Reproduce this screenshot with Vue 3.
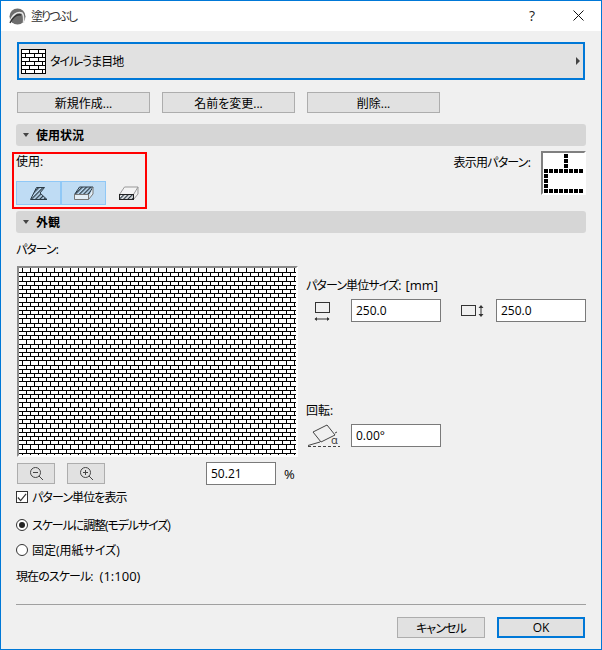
<template>
  <div class="window">
    <div class="titlebar">
      <svg class="logo" width="17" height="17" viewBox="0 0 17 17">
        <circle cx="8.5" cy="8.5" r="8" fill="#6d6d6d" />
        <path d="M1 14 C3 7 8 3 13 5 C15 7 15 10 14.5 15" fill="none" stroke="#e8e8e8" stroke-width="1.6" />
        <path d="M1 15 C4 9 8 6 12 7" fill="none" stroke="#333" stroke-width="1.4" />
      </svg>
      <span class="title">塗りつぶし</span>
      <span class="help">?</span>
      <svg class="close" width="11" height="11" viewBox="0 0 11 11">
        <path d="M0.5 0.5 L10.5 10.5 M10.5 0.5 L0.5 10.5" stroke="#111" stroke-width="1" fill="none" />
      </svg>
    </div>

    <div class="body">
      <div class="fill-select">
        <svg class="brick-icon" width="25" height="25" viewBox="0 0 25 25" shape-rendering="crispEdges">
          <rect x="0.5" y="0.5" width="24" height="24" fill="#fff" stroke="#000" />
          <path v-for="y in [4.5, 8.5, 12.5, 16.5, 20.5]" :key="y" :d="`M1 ${y} H24`" stroke="#000" />
          <path d="M8.5 1V4M17.5 1V4M4.5 5V8M13.5 5V8M21.5 5V8M8.5 9V12M17.5 9V12M4.5 13V16M13.5 13V16M21.5 13V16M8.5 17V20M17.5 17V20M4.5 21V24M13.5 21V24M21.5 21V24" stroke="#000" />
        </svg>
        <span>タイル-うま目地</span>
        <i class="tri-right"></i>
      </div>

      <div class="actions">
        <button class="btn">新規作成...</button>
        <button class="btn">名前を変更...</button>
        <button class="btn">削除...</button>
      </div>

      <div class="section"><i class="tri-down"></i>使用状況</div>
      <div class="usage">
        <div class="usage-left">
          <div class="label">使用:</div>
          <div class="toggles">
            <div class="toggle on">
              <svg width="18" height="13" viewBox="0 0 18 13">
                <defs>
                  <pattern id="hatch" width="3" height="3" patternUnits="userSpaceOnUse" patternTransform="rotate(45)">
                    <rect width="1.3" height="3" fill="#2c3b46" />
                  </pattern>
                </defs>
                <path d="M0.5 12.5 L6.5 0.5 H14.5 L10 6 L17 12.5 Z" fill="url(#hatch)" stroke="#2c3b46" />
              </svg>
            </div>
            <div class="toggle on">
              <svg width="20" height="14" viewBox="0 0 20 14">
                <path d="M0.5 8.5 L5.5 1 H19 L14.5 8.5 Z" fill="url(#hatch)" stroke="#2c3b46" />
                <path d="M0.5 8.5 H14.5 V13.5 H0.5 Z M14.5 13.5 L19 8 V1" fill="#e4eef6" stroke="#777" />
              </svg>
            </div>
            <div class="toggle">
              <svg width="20" height="14" viewBox="0 0 20 14">
                <path d="M0.5 8.5 L5.5 1 H19 L14.5 8.5 Z" fill="#f4f4f4" stroke="#999" />
                <path d="M14.5 13.5 L19 8 V1" fill="none" stroke="#999" />
                <rect x="0.5" y="8.5" width="14" height="5" fill="url(#hatch)" stroke="#222" />
              </svg>
            </div>
          </div>
        </div>
        <div class="usage-right">
          <span class="label">表示用パターン:</span>
          <div class="swatch">
            <svg width="41" height="40" viewBox="0 0 41 40" shape-rendering="crispEdges">
              <rect v-for="d in swatchDots" :key="d[0] + '-' + d[1]" :x="d[0]" :y="d[1]" width="4" height="4" fill="#000" />
            </svg>
          </div>
        </div>
        <div class="highlight"></div>
      </div>

      <div class="section"><i class="tri-down"></i>外観</div>
      <div class="look">
        <div class="look-left">
          <div class="label pat-label">パターン:</div>
          <div class="preview">
            <svg width="277" height="187" shape-rendering="crispEdges">
              <rect width="277" height="187" fill="#fff" />
              <path :d="brickPath" stroke="#000" stroke-width="1" fill="none" />
            </svg>
          </div>
          <div class="zoom-row">
            <button class="btn zoom-btn">
              <svg width="15" height="15" viewBox="0 0 15 15" fill="none" stroke="#444">
                <circle cx="6.5" cy="6.5" r="5" />
                <path d="M10 10 L14 14 M4 6.5 H9" />
              </svg>
            </button>
            <button class="btn zoom-btn">
              <svg width="15" height="15" viewBox="0 0 15 15" fill="none" stroke="#444">
                <circle cx="6.5" cy="6.5" r="5" />
                <path d="M10 10 L14 14 M4 6.5 H9 M6.5 4 V9" />
              </svg>
            </button>
            <div class="input pct">50.21</div>
            <span class="pct-sign">%</span>
          </div>
          <label class="check-row">
            <span class="checkbox">
              <svg width="11" height="11" viewBox="0 0 11 11"><path d="M1 5.5 L4 9 L10 1.5" fill="none" stroke="#333" stroke-width="1.3" /></svg>
            </span>
            <span class="tight">パターン単位を表示</span>
          </label>
          <div class="radio-row first"><span class="radio on"></span><span class="tighter">スケールに調整(モデルサイズ)</span></div>
          <div class="radio-row"><span class="radio"></span>固定(用紙サイズ)</div>
          <div class="label scale"><span class="tight">現在のスケール:</span><span class="latin scale-val">(1:100)</span></div>
        </div>

        <div class="look-right">
          <div class="label size-label"><span class="tight">パターン単位サイズ:</span><span class="latin unit">[mm]</span></div>
          <div class="size-row">
            <svg class="size-icon" width="16" height="19" viewBox="0 0 16 19" fill="none" stroke="#333">
              <rect x="1.5" y="0.5" width="14" height="10" />
              <path d="M1 17 H15" />
              <path d="M0.5 17 L3 15 V19 Z M15.5 17 L13 15 V19 Z" fill="#333" stroke="none" />
            </svg>
            <div class="input">250.0</div>
            <svg class="size-icon2" width="23" height="12" viewBox="0 0 23 12" fill="none" stroke="#333">
              <rect x="0.5" y="0.5" width="14" height="10" />
              <path d="M20 2 V10" />
              <path d="M20 0 L22.5 3 H17.5 Z M20 12 L22.5 9 H17.5 Z" fill="#333" stroke="none" />
            </svg>
            <div class="input">250.0</div>
          </div>
          <div class="label rot-label">回転:</div>
          <div class="size-row">
            <svg class="rot-icon" width="33" height="23" viewBox="0 0 33 23" fill="none" stroke="#444">
              <path d="M6 8 L20 1 L28 11 L14 18 Z" />
              <path d="M1 22.5 H33" stroke-dasharray="3 2" />
              <path d="M1 21.5 L13 18" />
              <path d="M28 9 L30 8" />
              <text x="24" y="20" font-size="11" fill="#333" stroke="none">α</text>
            </svg>
            <div class="input">0.00°</div>
          </div>
        </div>
      </div>

      <div class="separator"></div>
      <div class="footer">
        <button class="btn footer-btn tight">キャンセル</button>
        <button class="btn footer-btn primary">OK</button>
      </div>
    </div>
  </div>
</template>

<script setup>
// dots of the small display pattern in the upper right
const swatchDots = []
for (let i = 0; i < 8; i++) {
  swatchDots.push([1 + i * 5, 16])
  swatchDots.push([1 + i * 5, 36])
}
;[1, 6, 11].forEach((y) => swatchDots.push([21, y]))
;[21, 26, 31].forEach((y) => swatchDots.push([1, y]))

// brick courses, 8px wide, alternate rows shifted by half a brick
const pitch = 4.2
let brickPath = ''
for (let i = 0; i < 45; i++) {
  const y = Math.round(i * pitch)
  const next = Math.round((i + 1) * pitch)
  brickPath += `M0 ${next + 0.5}H277`
  for (let x = i % 2 ? 7 : 3; x < 277; x += 8) {
    brickPath += `M${x + 0.5} ${y}V${next}`
  }
}
</script>

<style>
html,
body {
  margin: 0;
  background: #f0f0f0;
}
</style>

<style scoped>
.window {
  box-sizing: border-box;
  width: 602px;
  height: 650px;
  border: 1px solid #0078d7;
  background: #f0f0f0;
  font-family: "Open Sans", "Noto Sans CJK JP", sans-serif;
  font-size: 12px;
  font-feature-settings: "palt";
  color: #000;
  overflow: hidden;
}

.titlebar {
  display: flex;
  align-items: center;
  height: 30px;
  background: #fff;
  padding: 0 17px 0 8px;
}

.logo {
  margin-right: 5px;
}

.title {
  flex: 1;
  color: #333;
  letter-spacing: -2px;
}

.help {
  margin: 0 38px 2px 0;
  font-size: 14px;
  color: #222;
}

.close {
  margin-bottom: 2px;
}

.body {
  padding: 11px 15px 0;
}

.fill-select {
  display: flex;
  align-items: center;
  box-sizing: border-box;
  height: 38px;
  margin: 0 1px;
  padding: 0 3px 0 2px;
  border: 2px solid #0078d7;
  background: #e1e1e1;
}

.brick-icon {
  margin-right: 4px;
  flex: none;
}

.fill-select span {
  flex: 1;
  letter-spacing: -1px;
}

.tri-right {
  width: 0;
  height: 0;
  border-left: 4px solid #444;
  border-top: 4px solid transparent;
  border-bottom: 4px solid transparent;
}

.actions {
  display: flex;
  gap: 12px;
  margin: 12px 0 11px 1px;
}

.btn {
  box-sizing: border-box;
  width: 133px;
  height: 21px;
  padding: 0;
  border: 1px solid #adadad;
  background: #e1e1e1;
  font: inherit;
  color: #000;
}

.section {
  display: flex;
  align-items: center;
  height: 22px;
  border-radius: 3px;
  background: #d6d6d6;
  font-weight: 700;
}

.tri-down {
  width: 0;
  height: 0;
  margin: 0 7px 0 7px;
  border-top: 4px solid #444;
  border-left: 3.5px solid transparent;
  border-right: 3.5px solid transparent;
}

.usage {
  position: relative;
  display: flex;
  justify-content: space-between;
  height: 65px;
}

.label {
  line-height: 16px;
}

.tight {
  letter-spacing: -0.9px;
}

.tighter {
  letter-spacing: -1.1px;
}

.latin {
  font-size: 13px;
}

.usage-left .label {
  margin-top: 8px;
}

.toggles {
  display: flex;
  margin-top: 11px;
}

.toggle {
  display: flex;
  align-items: center;
  justify-content: center;
  box-sizing: border-box;
  width: 45px;
  height: 24px;
  border: 1px solid transparent;
}

.toggle.on {
  background: #bfdcf4;
  border-color: #90c8f6;
}

.usage-right {
  display: flex;
  align-items: flex-start;
  margin-top: 5px;
}

.usage-right .label {
  margin: 4px 11px 0 0;
  letter-spacing: -0.8px;
}

.swatch {
  box-sizing: border-box;
  width: 45px;
  height: 44px;
  border: 2px solid #fff;
  border-top-color: #808080;
  border-left-color: #808080;
  background: #fff;
}

.swatch svg {
  display: block;
}

/* red callout drawn over the screenshot */
.highlight {
  position: absolute;
  left: -4px;
  top: 6px;
  width: 135px;
  height: 57px;
  box-sizing: border-box;
  border: 2px solid #f00;
  pointer-events: none;
}

.look {
  display: flex;
}

.look-left {
  width: 290px;
  flex: none;
}

.pat-label {
  margin-top: 9px;
  letter-spacing: -1px;
}

.preview {
  box-sizing: border-box;
  width: 281px;
  height: 191px;
  margin: 8px 0 0 1px;
  border: 2px solid #fff;
  border-top-color: #8a8a8a;
  border-left-color: #8a8a8a;
}

.preview svg {
  display: block;
}

.zoom-row {
  display: flex;
  align-items: center;
  margin: 5px 0 0 1px;
}

.zoom-btn {
  display: flex;
  align-items: center;
  justify-content: center;
  width: 38px;
  margin-right: 12px;
}

.input {
  box-sizing: border-box;
  width: 90px;
  height: 23px;
  padding-left: 4px;
  border: 1px solid #7a7a7a;
  background: #fff;
  line-height: 21px;
}

.pct {
  width: 70px;
  margin-left: 89px;
}

.pct-sign {
  margin-left: 8px;
  font-size: 13px;
}

.check-row {
  display: flex;
  align-items: center;
  gap: 4px;
  margin-top: 4px;
  height: 16px;
}

.checkbox {
  display: flex;
  align-items: center;
  justify-content: center;
  box-sizing: border-box;
  width: 12px;
  height: 12px;
  border: 1px solid #333;
  background: #fff;
}

.radio-row {
  display: flex;
  align-items: center;
  gap: 4px;
  height: 16px;
  margin-top: 9px;
}

.radio-row.first {
  margin-top: 12px;
}

.radio {
  position: relative;
  box-sizing: border-box;
  width: 12px;
  height: 12px;
  border: 1px solid #333;
  border-radius: 50%;
  background: #fff;
}

.radio.on::after {
  content: "";
  position: absolute;
  left: 2px;
  top: 2px;
  width: 6px;
  height: 6px;
  border-radius: 50%;
  background: #222;
}

.scale {
  margin-top: 10px;
}

.scale-val {
  margin-left: 7px;
}

.size-label {
  margin-top: 44px;
}

.unit {
  margin-left: 5px;
}

.size-row {
  display: flex;
  align-items: center;
  margin-top: 5px;
}

.size-icon {
  margin: 2px 21px 0 8px;
  flex: none;
}

.size-icon2 {
  margin: 0 12px 0 20px;
  flex: none;
}

.rot-label {
  margin-top: 81px;
}

.rot-icon {
  margin: 0 11px 0 1px;
  flex: none;
}

.separator {
  height: 1px;
  margin-top: 19px;
  background: #a0a0a0;
}

.footer {
  display: flex;
  justify-content: flex-end;
  gap: 12px;
  margin-top: 12px;
  padding-right: 1px;
}

.footer-btn {
  width: 88px;
}

.primary {
  border: 2px solid #0078d7;
}
</style>
